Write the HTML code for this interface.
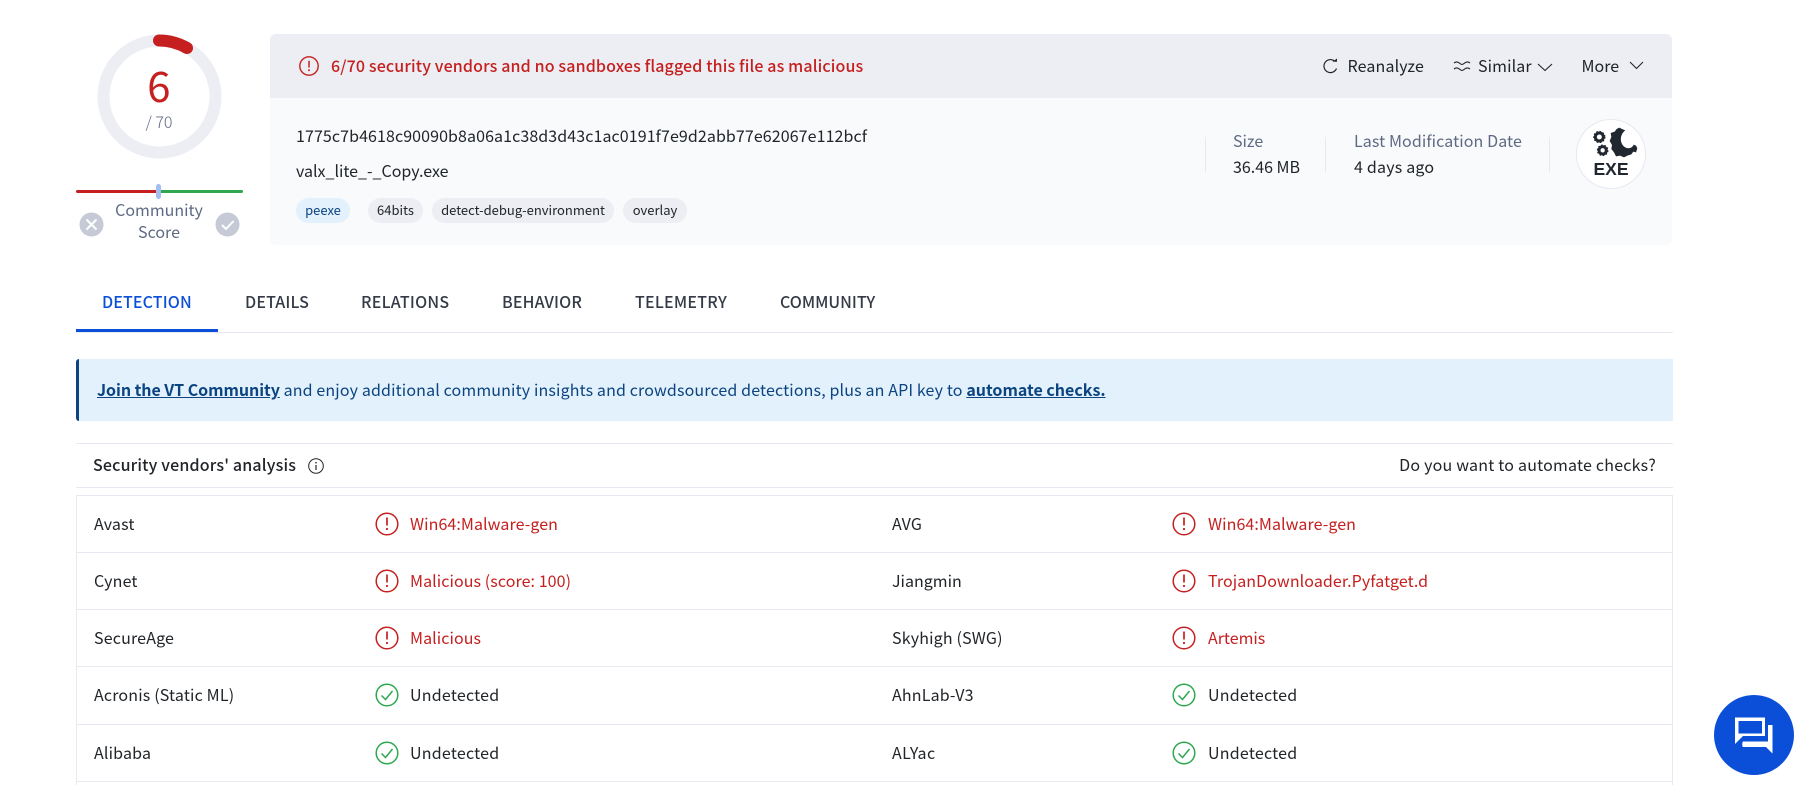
<!DOCTYPE html>
<html>
<head>
<meta charset="utf-8">
<style>
html,body{margin:0;padding:0;background:#fff;width:1812px;height:785px;overflow:hidden}
body{position:relative;font-family:"Liberation Sans","Noto Sans CJK SC",sans-serif}
*{box-sizing:border-box}
.t{position:absolute;white-space:nowrap;font-family:"Noto Sans CJK SC","Liberation Sans",sans-serif;font-size:16px;line-height:24px;color:#212529}
.b{position:absolute}
svg{position:absolute;overflow:visible}
.pill{position:absolute;top:198px;height:25px;border-radius:13px;background:#eceef3;font-family:"Noto Sans CJK SC",sans-serif;font-size:13px;line-height:24px;text-align:center;color:#212529;white-space:nowrap}
.tab{font-weight:500;color:#343a46}
.hl{position:absolute;left:76px;width:1597px;height:1px;background:#e6e9f0}
.r{color:#c5201f;letter-spacing:.08px}
.n{letter-spacing:.17px}
.u{letter-spacing:.23px}
</style>
</head>
<body>
<svg style="left:97px;top:34px" width="125" height="125" viewBox="0 0 125 125">
<circle cx="62.5" cy="62.5" r="56" fill="none" stroke="#eceef4" stroke-width="12"/>
<path d="M 62 6.5 A 56 56 0 0 1 90 14" fill="none" stroke="#c5201f" stroke-width="12" stroke-linecap="round"/>
</svg>
<div class="t r" style="left:119px;width:80px;text-align:center;top:55px;font-size:42px;line-height:60px;font-weight:400">6</div>
<div class="t" style="left:119px;width:80px;text-align:center;top:109px;font-size:16px;color:#5e6a84;font-weight:300">/ 70</div>

<div class="b" style="left:76px;top:190px;width:83px;height:3px;background:#c5201f;border-radius:2px 0 0 2px"></div>
<div class="b" style="left:159px;top:190px;width:84px;height:3px;background:#2ea84f;border-radius:0 2px 2px 0"></div>
<div class="b" style="left:156px;top:184px;width:5px;height:15px;background:#a5bdf0;border-radius:3px"></div>
<div class="t" style="left:100px;width:118px;text-align:center;top:198px;color:#5e6a84;font-size:16px;line-height:22px;white-space:normal">Community Score</div>
<svg style="left:79px;top:212px" width="25" height="25" viewBox="0 0 25 25"><circle cx="12.5" cy="12.5" r="12" fill="#c6cad6"/><path d="M7.5 7.5l10 10M17.500 7.500l-10 10" stroke="#fff" stroke-width="2" fill="none"/></svg>
<svg style="left:215px;top:212px" width="25" height="25" viewBox="0 0 25 25"><circle cx="12.5" cy="12.5" r="12" fill="#c6cad6"/><path d="M7 13l4 4 7.500-8" stroke="#fff" stroke-width="2" fill="none"/></svg>

<div class="b" style="left:270px;top:34px;width:1402px;height:211px;background:#f9fafc;border-radius:6px"></div>
<div class="b" style="left:270px;top:34px;width:1402px;height:64px;background:#eceef3;border-radius:6px 6px 0 0"></div>

<svg style="left:299px;top:56px" width="20" height="20" viewBox="0 0 20 20"><circle cx="10" cy="10" r="9.200" fill="none" stroke="#c5201f" stroke-width="1.400"/><path d="M10 4.800v6.700" stroke="#c5201f" stroke-width="1.500"/><circle cx="10" cy="14.300" r="1" fill="#c5201f"/></svg>
<div class="t r" style="left:331px;top:53px;font-weight:500;letter-spacing:.135px">6/70 security vendors and no sandboxes flagged this file as malicious</div>

<svg style="left:1323px;top:58px" width="16" height="17" viewBox="0 0 16 17"><path d="M13.500 10.500A6.500 6.500 0 1 1 11.500 3" fill="none" stroke="#212529" stroke-width="1.200"/><path d="M9.500 3.800l4.500 0 0-3.300z" fill="#212529"/></svg>
<div class="t" style="left:1347.5px;top:53px;letter-spacing:.15px">Reanalyze</div>
<svg style="left:1453px;top:60px" width="18" height="12" viewBox="0 0 18 12"><path d="M1 3c4-3 6 1.500 8 1.500S13 0 17 3M1 9c4-3 6 1.500 8 1.500S13 6 17 9" fill="none" stroke="#212529" stroke-width="1.100"/></svg>
<div class="t" style="left:1478px;top:53px;letter-spacing:.12px">Similar</div>
<svg style="left:1537px;top:63px" width="16" height="9" viewBox="0 0 16 9"><path d="M1 1l7 6.500L15 1" fill="none" stroke="#212529" stroke-width="1.100"/></svg>
<div class="t" style="left:1581.500px;top:53px">More</div>
<svg style="left:1629px;top:61px" width="15" height="9" viewBox="0 0 15 9"><path d="M1 1l6.500 6.500L14 1" fill="none" stroke="#212529" stroke-width="1.100"/></svg>

<div class="t" style="left:296px;top:123px;letter-spacing:.09px">1775c7b4618c90090b8a06a1c38d3d43c1ac0191f7e9d2abb77e62067e112bcf</div>
<div class="t" style="left:296px;top:158px">valx_lite_-_Copy.exe</div>
<div class="pill" style="left:296px;width:54px;background:#e3f1fd;color:#0b4480">peexe</div>
<div class="pill" style="left:368px;width:55px">64bits</div>
<div class="pill" style="left:432px;width:182px">detect-debug-environment</div>
<div class="pill" style="left:623px;width:64px">overlay</div>

<div class="b" style="left:1205px;top:137px;width:1px;height:35px;background:#e6e9f0"></div>
<div class="b" style="left:1325px;top:137px;width:1px;height:35px;background:#e6e9f0"></div>
<div class="b" style="left:1549px;top:137px;width:1px;height:35px;background:#e6e9f0"></div>
<div class="t" style="left:1233px;top:128px;color:#5e6a84">Size</div>
<div class="t" style="left:1233px;top:154px">36.46 MB</div>
<div class="t" style="left:1354px;top:128px;color:#5e6a84;letter-spacing:.1px">Last Modification Date</div>
<div class="t" style="left:1354px;top:154px;letter-spacing:.2px">4 days ago</div>

<div class="b" style="left:1576px;top:119px;width:70px;height:70px;border-radius:50%;background:#fff;border:1px solid #e6e9f0"></div>
<svg style="left:1570px;top:115px" width="84" height="80" viewBox="0 0 252 240">
<g fill="none" stroke="#212730">
<circle cx="88" cy="66" r="12" stroke-width="9"/>
<circle cx="88" cy="66" r="17" stroke-width="3" stroke-dasharray="5 5"/>
<circle cx="98" cy="106" r="11" stroke-width="9"/>
<circle cx="98" cy="106" r="16" stroke-width="3" stroke-dasharray="5 5"/>
</g>
<path d="M140 42 L148 38 L156 42 L166 46 C149 58 148 84 164 96 C174 103 187 100 191 89 L198 92 L202 100 L198 112 L190 110 L184 118 L172 122 L162 127 L150 122 L138 124 L132 112 L124 102 L126 90 L119 78 L124 66 L122 54 L134 50z" fill="#212730"/>
</svg>
<div class="t" style="left:1576px;width:70px;text-align:center;top:156.500px;font-family:'Liberation Sans',sans-serif;font-weight:700;font-size:17.500px;line-height:24px;color:#212730;letter-spacing:0">EXE</div>

<div class="t tab" style="left:102px;top:289px;color:#0b4fd9;letter-spacing:.12px">DETECTION</div>
<div class="t tab" style="left:245px;top:289px;letter-spacing:.15px">DETAILS</div>
<div class="t tab" style="left:361px;top:289px;letter-spacing:.25px">RELATIONS</div>
<div class="t tab" style="left:502px;top:289px;letter-spacing:.15px">BEHAVIOR</div>
<div class="t tab" style="left:635px;top:289px;letter-spacing:.25px">TELEMETRY</div>
<div class="t tab" style="left:780px;top:289px">COMMUNITY</div>
<div class="hl" style="top:332px"></div>
<div class="b" style="left:76px;top:329px;width:142px;height:3px;background:#0b4fd9"></div>

<div class="b" style="left:76px;top:359px;width:1597px;height:62px;background:#e3f1fd;border-left:3px solid #0b4480;border-radius:3px 0 0 3px"></div>
<div class="t" style="left:97px;top:377px;color:#0b4480;letter-spacing:.14px"><b style="font-weight:700;text-decoration:underline;letter-spacing:-.05px">Join the VT Community</b> and enjoy additional community insights and crowdsourced detections, plus an API key to <b style="font-weight:700;text-decoration:underline;letter-spacing:0">automate checks.</b></div>

<div class="hl" style="top:443px"></div>
<div class="t" style="left:93px;top:452px;font-weight:500;letter-spacing:.17px">Security vendors' analysis</div>
<svg style="left:308px;top:458px" width="16" height="16" viewBox="0 0 16 16"><circle cx="8" cy="8" r="7.300" fill="none" stroke="#212529" stroke-width="1"/><path d="M8 7v5" stroke="#212529" stroke-width="1.200"/><circle cx="8" cy="4.700" r=".8" fill="#212529"/></svg>
<div class="t" style="right:156px;top:452px;letter-spacing:.21px">Do you want to automate checks?</div>
<div class="hl" style="top:487px"></div>

<div class="hl" style="top:495px"></div>
<div class="hl" style="top:552px"></div>
<div class="hl" style="top:609px"></div>
<div class="hl" style="top:666px"></div>
<div class="hl" style="top:724px"></div>
<div class="hl" style="top:781px"></div>
<div class="b" style="left:76px;top:495px;width:1px;height:290px;background:#e6e9f0"></div>
<div class="b" style="left:1672px;top:495px;width:1px;height:290px;background:#e6e9f0"></div>

<svg width="0" height="0" style="position:absolute">
<defs>
<symbol id="bad" viewBox="0 0 24 24"><circle cx="12" cy="12" r="10.800" fill="none" stroke="#c5201f" stroke-width="1.500"/><path d="M12 5.500v8" stroke="#c5201f" stroke-width="1.700"/><circle cx="12" cy="17" r="1.100" fill="#c5201f"/></symbol>
<symbol id="ok" viewBox="0 0 24 24"><circle cx="12" cy="12" r="10.800" fill="none" stroke="#2ea84f" stroke-width="1.500"/><path d="M6.500 12.500l4 4 7-8.500" fill="none" stroke="#2ea84f" stroke-width="1.500"/></symbol>
</defs>
</svg>

<div class="t n" style="left:94px;top:511px">Avast</div>
<svg style="left:375px;top:512px" width="24" height="24"><use href="#bad"/></svg>
<div class="t r" style="left:410px;top:511px">Win64:Malware-gen</div>
<div class="t n" style="left:892px;top:511px">AVG</div>
<svg style="left:1172px;top:512px" width="24" height="24"><use href="#bad"/></svg>
<div class="t r" style="left:1208px;top:511px">Win64:Malware-gen</div>

<div class="t n" style="left:94px;top:568px">Cynet</div>
<svg style="left:375px;top:569px" width="24" height="24"><use href="#bad"/></svg>
<div class="t r" style="left:410px;top:568px">Malicious (score: 100)</div>
<div class="t" style="left:892px;top:568px">Jiangmin</div>
<svg style="left:1172px;top:569px" width="24" height="24"><use href="#bad"/></svg>
<div class="t r" style="left:1208px;top:568px">TrojanDownloader.Pyfatget.d</div>

<div class="t n" style="left:94px;top:625px">SecureAge</div>
<svg style="left:375px;top:626px" width="24" height="24"><use href="#bad"/></svg>
<div class="t r" style="left:410px;top:625px">Malicious</div>
<div class="t n" style="left:892px;top:625px">Skyhigh (SWG)</div>
<svg style="left:1172px;top:626px" width="24" height="24"><use href="#bad"/></svg>
<div class="t r" style="left:1208px;top:625px;letter-spacing:0">Artemis</div>

<div class="t n" style="left:94px;top:682px">Acronis (Static ML)</div>
<svg style="left:375px;top:683px" width="24" height="24"><use href="#ok"/></svg>
<div class="t u" style="left:410px;top:682px">Undetected</div>
<div class="t n" style="left:892px;top:682px">AhnLab-V3</div>
<svg style="left:1172px;top:683px" width="24" height="24"><use href="#ok"/></svg>
<div class="t u" style="left:1208px;top:682px">Undetected</div>

<div class="t n" style="left:94px;top:740px">Alibaba</div>
<svg style="left:375px;top:741px" width="24" height="24"><use href="#ok"/></svg>
<div class="t u" style="left:410px;top:740px">Undetected</div>
<div class="t n" style="left:892px;top:740px;letter-spacing:.4px">ALYac</div>
<svg style="left:1172px;top:741px" width="24" height="24"><use href="#ok"/></svg>
<div class="t u" style="left:1208px;top:740px">Undetected</div>

<div class="b" style="left:1714px;top:695px;width:80px;height:80px;border-radius:50%;background:#0b4fd9"></div>
<svg style="left:1710px;top:690px" width="90" height="90" viewBox="0 0 90 90">
<path fill-rule="evenodd" d="M25 27.500H55V46H33L25 54zM28.500 31V43.500H52V31z" fill="#fff"/>
<path d="M58 35H62.500V63.500L56 57H33C32 57 32 52 33 51.500H58z" fill="#fff"/>
</svg>
</body>
</html>
